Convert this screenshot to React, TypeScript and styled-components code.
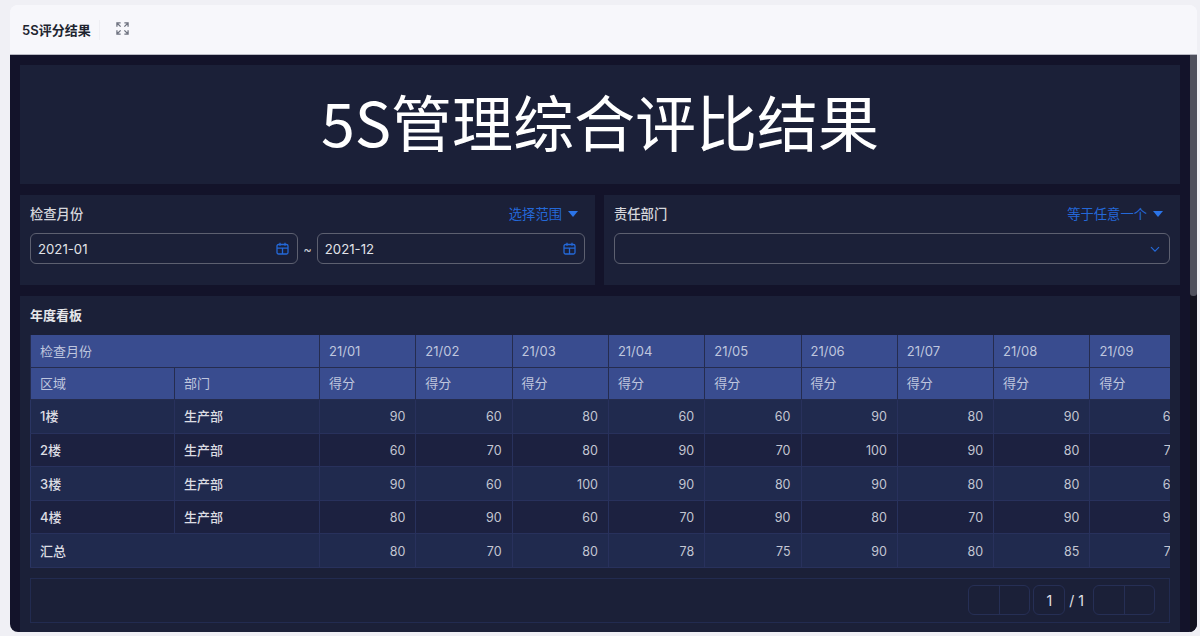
import React from "react";
import styled, { createGlobalStyle } from "styled-components";

const Global = createGlobalStyle`
  html, body { margin: 0; padding: 0; height: 100%; overflow: hidden; background: #f0f0f5; }
  body { font-family: "Inter", "Noto Sans CJK SC", sans-serif; }
  #root { height: 100%; }
`;

const Page = styled.div`
  height: 636px; padding: 5px 3px 4px 10px; box-sizing: border-box; display: flex;
`;
const Card = styled.div`
  flex: 1; min-width: 0; display: flex; flex-direction: column; border-radius: 8px; overflow: hidden; background: #f7f7fb;
`;
const Header = styled.header`
  height: 50px; flex: none; box-sizing: border-box; display: flex; align-items: center; padding-left: 12px; background: #f7f7fb; border-bottom: 1px solid #b9bac4;
`;
const PageName = styled.span`
  font: 600 13px/20px "Inter", "Noto Sans CJK SC", sans-serif; color: #20242f; padding-right: 8px; border-right: 1px solid #eeeef3;
`;
const IconBtn = styled.span`
  display: flex; margin: -2px 0 0 16px; color: #6f7380;
`;
const Body = styled.div`
  flex: 1; min-height: 0; display: flex; background: #13132a;
`;
const Content = styled.div`
  flex: 1; min-width: 0; padding: 10px 10px 0; display: flex; flex-direction: column; gap: 11px; overflow: hidden;
`;
const Scrollbar = styled.div`
  flex: none; width: 7px; background: #12121f; display: flex; align-items: flex-start;
`;
const Thumb = styled.div`
  width: 7px; height: 241px; background: #4f505d; border-radius: 0 0 3px 3px;
`;
const TitlePanel = styled.div`
  height: 119px; flex: none; box-sizing: border-box; padding-bottom: 9px; background: #1b2038; display: flex; align-items: center; justify-content: center;
  color: #fff; font: 400 61px/1 "Noto Sans CJK SC", sans-serif;
`;
const FilterRow = styled.div`
  flex: none; display: grid; grid-template-columns: 575px 1fr; gap: 9px; height: 90px;
`;
const FilterCard = styled.div`
  background: #1b2038; padding: 10px 10px 0;
`;
const FilterHead = styled.div`
  display: flex; justify-content: space-between; align-items: center; height: 18px; margin-bottom: 10px;
`;
const Label = styled.span`
  font: 500 13.3px/18px "Noto Sans CJK SC", sans-serif; color: #d6d7dc;
`;
const Mode = styled.span`
  display: flex; align-items: center; gap: 6px; font: 400 13.3px/18px "Noto Sans CJK SC", sans-serif; color: #2468d8;
`;
const Caret = styled.i`
  width: 0; height: 0; border-left: 5.5px solid transparent; border-right: 5.5px solid transparent; border-top: 6.5px solid #2b74e8; margin-right: 7px;
`;
const RangeRow = styled.div`
  display: flex; align-items: center; gap: 5px;
`;
const Field = styled.div`
  flex: 1; height: 31px; box-sizing: border-box; display: flex; align-items: center; justify-content: space-between;
  padding: 0 8px 0 7px; border: 1px solid #5d6070; border-radius: 6px; color: #e2e3e8; font: 400 13.2px/18px "Inter", "Noto Sans CJK SC", sans-serif;
`;
const Tilde = styled.span`
  color: #c6c8d0; font: 400 13px/18px "Inter", sans-serif;
`;
const TablePanel = styled.div`
  flex: 1; min-height: 0; background: #1b2038; padding: 9px 10px 0;
`;
const TableTitle = styled.div`
  font: 700 13px/20px "Noto Sans CJK SC", sans-serif; color: #e6e7ea; margin-bottom: 10px;
`;
const TableWrap = styled.div`
  overflow: hidden; height: 234px; width: 1140px;
`;
const Table = styled.table`
  border-collapse: collapse; table-layout: fixed; width: 1158.4px; font: 400 13px/18px "Inter", "Noto Sans CJK SC", sans-serif;
`;
const Th = styled.th`
  background: #394c8f; color: #bfc6de; font-weight: 400; text-align: left; height: 32.3px; box-sizing: border-box; padding: 0 9px; border: 1px solid #252c4f; border-top: 0;
`;
const Td = styled.td<{ $striped?: boolean; $num?: boolean }>`
  height: 33.6px; box-sizing: border-box; padding: ${p => (p.$num ? "2px 10px 0" : "0 9px")}; color: ${p => (p.$num ? "#c3c6d2" : "#dcdde3")};
  background: ${p => (p.$striped ? "#202a4e" : "#1c2140")};
  font-weight: ${p => (p.$num ? 400 : 500)}; font-size: ${p => (p.$num ? "12.5px" : "13px")}; text-align: ${p => (p.$num ? "right" : "left")};
  border: 1px solid #28315c; border-left-color: #2a3563; white-space: nowrap; overflow: hidden;
`;
const Pager = styled.div`
  margin-top: 9px; width: 1140px; height: 45px; box-sizing: border-box; border: 1px solid #222b50; display: flex; align-items: center; justify-content: flex-end; padding: 0 14px 2px 0; gap: 3px; color: #e2e3e8; font: 400 14px/18px "Inter", sans-serif;
`;
const PagerGroup = styled.div`
  display: flex; border: 1px solid #262f55; border-radius: 6px; height: 30px; width: 62px; box-sizing: border-box;
`;
const PagerBtn = styled.span`
  flex: 1; & + & { border-left: 1px solid #262f55; }
`;
const PageNum = styled.span`
  width: 32px; height: 30px; box-sizing: border-box; padding-top: 2px; border: 1px solid #262f55; border-radius: 6px; display: flex; align-items: center; justify-content: center;
`;
const PageTotal = styled.span`
  margin: 0 6px 0 1px; padding-top: 2px;
`;

const months = ["21/01", "21/02", "21/03", "21/04", "21/05", "21/06", "21/07", "21/08", "21/09"];
const rows = [
  { a: "1楼", d: "生产部", v: [90, 60, 80, 60, 60, 90, 80, 90, 60] },
  { a: "2楼", d: "生产部", v: [60, 70, 80, 90, 70, 100, 90, 80, 70] },
  { a: "3楼", d: "生产部", v: [90, 60, 100, 90, 80, 90, 80, 80, 60] },
  { a: "4楼", d: "生产部", v: [80, 90, 60, 70, 90, 80, 70, 90, 90] },
];
const total = [80, 70, 80, 78, 75, 90, 80, 85, 70];

const Calendar = () => (
  <svg width="13" height="13" viewBox="0 0 13 13" fill="none" stroke="#2468d8" strokeWidth="1.3">
    <rect x="1" y="2.5" width="11" height="9.5" rx="1.5" />
    <path d="M1 6.2h11M6.5 6.2V12M4 .8v3M9 .8v3" />
  </svg>
);
const Expand = () => (
  <svg width="13" height="13" viewBox="0 0 14 14" fill="none" stroke="currentColor" strokeWidth="1.4">
    <path d="M1 5V1h4M1 1l4 4M13 5V1H9M13 1L9 5M1 9v4h4M1 13l4-4M13 9v4H9M13 13L9 9" />
  </svg>
);
const Chevron = () => (
  <svg width="12" height="12" viewBox="0 0 12 12" fill="none" stroke="#2468d8" strokeWidth="1.2">
    <path d="M2 4.2L6 8.2L10 4.2" />
  </svg>
);

export default function App() {
  return (
    <Page>
      <Global />
      <Card>
        <Header>
          <PageName>5S评分结果</PageName>
          <IconBtn><Expand /></IconBtn>
        </Header>
        <Body>
          <Content>
            <TitlePanel>5S管理综合评比结果</TitlePanel>
            <FilterRow>
              <FilterCard>
                <FilterHead><Label>检查月份</Label><Mode>选择范围<Caret /></Mode></FilterHead>
                <RangeRow>
                  <Field>2021-01<Calendar /></Field>
                  <Tilde>~</Tilde>
                  <Field>2021-12<Calendar /></Field>
                </RangeRow>
              </FilterCard>
              <FilterCard>
                <FilterHead><Label>责任部门</Label><Mode>等于任意一个<Caret /></Mode></FilterHead>
                <Field><span /><Chevron /></Field>
              </FilterCard>
            </FilterRow>
            <TablePanel>
              <TableTitle>年度看板</TableTitle>
              <TableWrap>
                <Table>
                  <colgroup>
                    <col style={{ width: 144 }} />
                    <col style={{ width: 145 }} />
                    {months.map((m, i) => <col key={m} style={{ width: i === 8 ? 99 : 96.3 }} />)}
                  </colgroup>
                  <thead>
                    <tr>
                      <Th colSpan={2}>检查月份</Th>
                      {months.map(m => <Th key={m}>{m}</Th>)}
                    </tr>
                    <tr>
                      <Th>区域</Th>
                      <Th>部门</Th>
                      {months.map(m => <Th key={m}>得分</Th>)}
                    </tr>
                  </thead>
                  <tbody>
                    {rows.map((r, i) => (
                      <tr key={r.a}>
                        <Td $striped={i % 2 === 0}>{r.a}</Td>
                        <Td $striped={i % 2 === 0}>{r.d}</Td>
                        {r.v.map((v, j) => <Td key={j} $striped={i % 2 === 0} $num>{v}</Td>)}
                      </tr>
                    ))}
                    <tr>
                      <Td $striped colSpan={2}>汇总</Td>
                      {total.map((v, j) => <Td key={j} $striped $num>{v}</Td>)}
                    </tr>
                  </tbody>
                </Table>
              </TableWrap>
              <Pager>
                <PagerGroup><PagerBtn /><PagerBtn /></PagerGroup>
                <PageNum>1</PageNum>
                <PageTotal>/ 1</PageTotal>
                <PagerGroup><PagerBtn /><PagerBtn /></PagerGroup>
              </Pager>
            </TablePanel>
          </Content>
          <Scrollbar><Thumb /></Scrollbar>
        </Body>
      </Card>
    </Page>
  );
}
